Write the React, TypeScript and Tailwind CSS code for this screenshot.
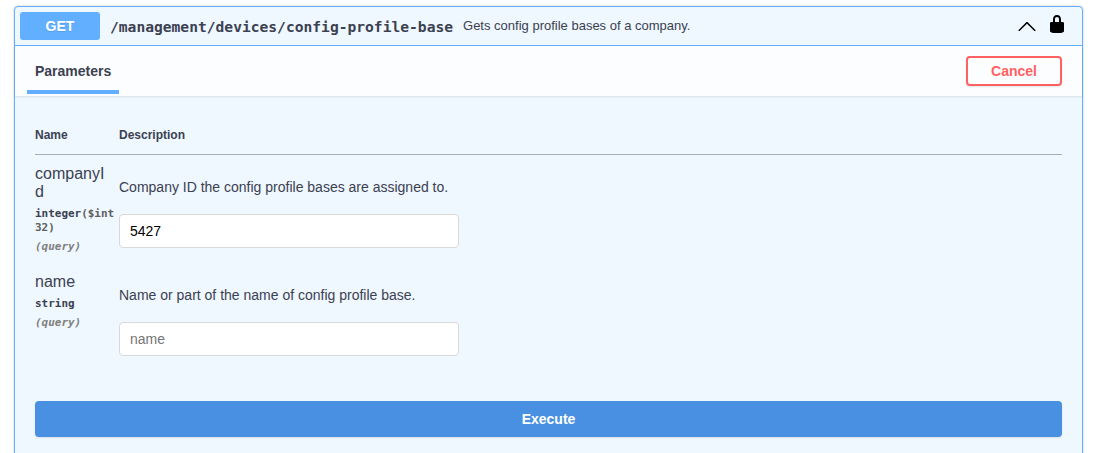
import React from "react";

type Param = {
  name: string;
  type: string;
  format?: string;
  description: string;
  value?: string;
};

const params: Param[] = [
  {
    name: "companyId",
    type: "integer",
    format: "($int32)",
    description: "Company ID the config profile bases are assigned to.",
    value: "5427",
  },
  {
    name: "name",
    type: "string",
    description: "Name or part of the name of config profile base.",
  },
];

function ParamRow({ param }: { param: Param }) {
  return (
    <div className="flex h-[108px] pt-[10px]">
      <div className="w-[84px] shrink-0">
        <div className="w-[72px] break-all text-[16px] leading-[18px]">{param.name}</div>
        <div className="w-[82px] break-all pt-[6px] font-['DejaVu_Sans_Mono',monospace] text-[10.96px] font-bold leading-[14px]">
          {param.type}
          {param.format && <span className="text-[#606060]">{param.format}</span>}
        </div>
        <div className="pt-[5px] font-['DejaVu_Sans_Mono',monospace] text-[10.96px] font-bold italic leading-[14px] text-[#808080]">
          (query)
        </div>
      </div>
      <div>
        <p className="pt-[12px] text-[14px] leading-[20px]">{param.description}</p>
        <input
          type="text"
          defaultValue={param.value}
          placeholder={param.name}
          className="mt-[17px] block h-[34px] w-[340px] rounded-[4px] border border-[#d9d9d9] bg-white px-[10px] text-[14px] text-black outline-none placeholder:text-[#757575]"
        />
      </div>
    </div>
  );
}

export default function App() {
  return (
    <div className="h-[453px] overflow-hidden bg-white pl-[14px] pr-[13px] pt-[6px] font-['Liberation_Sans',Arial,sans-serif] text-[#3b4151]">
      <div className="h-[500px] rounded-[4px] border border-[#61affe] bg-[#eff7ff] shadow-[0_0_3px_rgba(0,0,0,0.19)]">
        <div className="flex h-[39px] items-center border-b border-[#61affe] px-[5px]">
          <div className="flex h-[28px] w-[80px] items-center justify-center rounded-[3px] bg-[#61affe] text-[14px] font-bold text-white [text-shadow:0_1px_0_rgba(0,0,0,0.1)]">
            GET
          </div>
          <span className="ml-[10px] mt-[1px] whitespace-nowrap font-['DejaVu_Sans_Mono',monospace] text-[14.61px] font-bold leading-[20px]">
            /management/devices/config-profile-base
          </span>
          <span className="ml-[10px] whitespace-nowrap text-[13px] leading-[18px]">
            Gets config profile bases of a company.
          </span>
          <svg className="ml-auto h-[20px] w-[20px]" viewBox="0 0 20 20" fill="black">
            <path d="M17.418 14.908C17.69 15.176 18.127 15.176 18.397 14.908C18.667 14.64 18.668 14.207 18.397 13.939L10.489 6.109C10.219 5.841 9.782 5.841 9.51 6.109L1.602 13.939C1.332 14.207 1.332 14.64 1.602 14.908C1.872 15.176 2.309 15.176 2.581 14.908L10 7.767Z" />
          </svg>
          <svg className="ml-[10px] mr-[10px] -mt-[4px] h-[20px] w-[20px]" viewBox="0 0 20 20" fill="black">
            <path d="M15.8 8H14V5.6C14 2.703 12.665 1 10 1 7.334 1 6 2.703 6 5.6V8H4c-.553 0-1 .646-1 1.199V17c0 .549.428 1.139.951 1.307l1.197.387C5.672 18.861 6.55 19 7.1 19h5.8c.549 0 1.428-.139 1.951-.307l1.196-.387c.524-.167.953-.757.953-1.306V9.199C17 8.646 16.352 8 15.8 8zM12 8H8V5.199C8 3.754 8.797 3 10 3c1.203 0 2 .754 2 2.199V8z" />
          </svg>
        </div>

        <div className="flex h-[50px] items-center justify-between bg-[#fcfdff] pl-[12px] pr-[20px] shadow-[0_1px_2px_rgba(0,0,0,0.1)]">
          <div className="flex h-[48px] w-[92px] flex-col justify-between self-start">
            <h4 className="pl-[8px] pt-[15px] text-[14px] font-bold leading-[20px]">Parameters</h4>
            <div className="h-[4px] bg-[#61affe]" />
          </div>
          <button className="h-[30px] w-[96px] rounded-[4px] border-2 border-[#ff6060] text-[14px] font-bold text-[#ff6060] shadow-[0_1px_2px_rgba(0,0,0,0.1)]">
            Cancel
          </button>
        </div>

        <div className="px-[20px] pt-[28px]">
          <div className="flex h-[31px] border-b border-[#3b4151]/40 pt-[2px] text-[12px] font-bold leading-[18px]">
            <div className="w-[84px]">Name</div>
            <div>Description</div>
          </div>
          {params.map((param) => (
            <ParamRow key={param.name} param={param} />
          ))}
          <button className="mt-[30px] block h-[36px] w-full rounded-[4px] bg-[#4990e2] text-[14px] font-bold text-white shadow-[0_1px_2px_rgba(0,0,0,0.1)]">
            Execute
          </button>
        </div>
      </div>
    </div>
  );
}
